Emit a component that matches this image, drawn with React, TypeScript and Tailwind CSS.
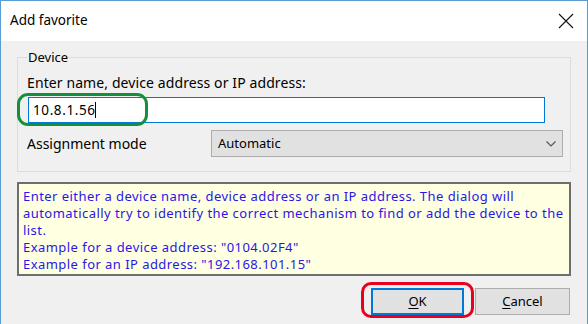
import { useState } from 'react'

const AddFavoriteDialog = () => {
  const [address, setAddress] = useState('10.8.1.56')

  return (
    <div
      className="w-[588px] h-[324px] flex flex-col border-x border-t border-[#5b9bd5] bg-[#f0f0f0] text-black overflow-hidden"
      style={{ fontFamily: '"Noto Sans", "Open Sans", sans-serif' }}
    >
      {/* Title bar */}
      <div className="h-[40px] bg-white flex items-center justify-between pl-[9px] pr-[12px] shrink-0">
        <span className="text-[13.5px] leading-none">Add favorite</span>
        <svg width="16" height="16" viewBox="0 0 16 16" className="mr-[1px]">
          <path d="M1 1 L15 15 M15 1 L1 15" stroke="#111" strokeWidth="1.1" fill="none" />
        </svg>
      </div>

      {/* Client area */}
      <div className="flex-1 px-4 flex flex-col">
        {/* Device group */}
        <fieldset className="mt-[8px] border border-[#dcdcdc] h-[123px] pl-[9px] pr-[7px]">
          <legend className="text-[13px] leading-[16px] px-[1px]">Device</legend>
          <div className="text-[14px] leading-[16px] mt-[10px] tracking-[0.1px]">
            Enter name, device address or IP address:
          </div>
          <div className="relative mt-[6px] mr-[18px] ml-[1px]">
            <div className="h-[26px] border border-[#0078d7] bg-white flex items-center pl-[4px]">
              <input
                value={address}
                onChange={(e) => setAddress(e.target.value)}
                className="outline-none bg-transparent text-[13.5px] tracking-[0.6px] flex-none"
                style={{ width: 62 }}
              />
              <span className="w-px h-[16px] bg-black" />
            </div>
            {/* green highlight */}
            <div className="absolute left-[-11px] top-[-4px] w-[131px] h-[33px] rounded-[11px] border-[3px] border-[#14903c]" />
          </div>
          <div className="flex items-center mt-[7px]">
            <span className="text-[14px] w-[184px]">Assignment mode</span>
            <div className="flex-1 h-[27px] bg-[#e1e1e1] border border-[#adadad] flex items-center justify-between pl-[6px] pr-[5px]">
              <span className="text-[13px]">Automatic</span>
              <svg width="12" height="8" viewBox="0 0 12 8">
                <path d="M1.5 1.5 L6 6 L10.5 1.5" stroke="#555" strokeWidth="1.2" fill="none" />
              </svg>
            </div>
          </div>
        </fieldset>

        {/* Info box */}
        <div className="mt-[10px] h-[94px] border-2 border-[#6e6e6e] bg-[#ffffe1] px-[4px] pt-[4px] text-[13px] leading-[17px] tracking-[0.45px] text-[#2a16e8]">
          <p>
            Enter either a device name, device address or an IP address. The dialog will
            automatically try to identify the correct mechanism to find or add the device to the
            list.
          </p>
          <p>Example for a device address: "0104.02F4"</p>
          <p>Example for an IP address: "192.168.101.15"</p>
        </div>

        {/* Buttons */}
        <div className="flex justify-end gap-[11px] mt-[12px] pr-[1px]">
          <div className="relative">
            <button className="w-[93px] h-[27px] bg-[#e1e1e1] border-2 border-[#0078d7] text-[13px]">
              <span className="underline underline-offset-2">O</span>K
            </button>
            {/* red highlight */}
            <div className="absolute left-[-10px] top-[-6px] w-[113px] h-[36px] rounded-[10px] border-[3px] border-[#e8001c]" />
          </div>
          <button className="w-[95px] h-[27px] bg-[#e1e1e1] border border-[#adadad] text-[13px]">
            <span className="underline underline-offset-2">C</span>ancel
          </button>
        </div>
      </div>
    </div>
  )
}

export default function App() {
  return <AddFavoriteDialog />
}
